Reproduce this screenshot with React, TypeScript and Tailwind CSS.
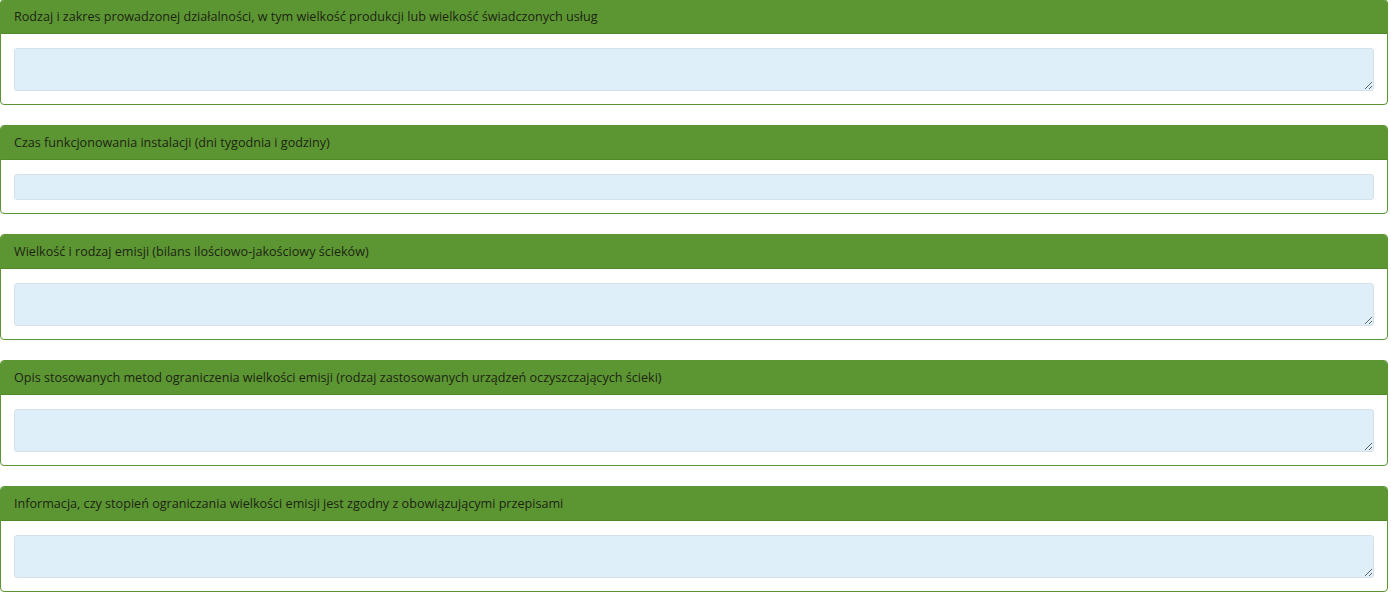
const sections = [
  { label: "Rodzaj i zakres prowadzonej działalności, w tym wielkość produkcji lub wielkość świadczonych usług", multi: true },
  { label: "Czas funkcjonowania instalacji (dni tygodnia i godziny)", multi: false },
  { label: "Wielkość i rodzaj emisji (bilans ilościowo-jakościowy ścieków)", multi: true },
  { label: "Opis stosowanych metod ograniczenia wielkości emisji (rodzaj zastosowanych urządzeń oczyszczających ścieki)", multi: true },
  { label: "Informacja, czy stopień ograniczania wielkości emisji jest zgodny z obowiązującymi przepisami", multi: true },
];

export default function App() {
  return (
    <div className="-mt-px flex w-[1388px] flex-col gap-[20px] bg-white font-['Open_Sans',sans-serif] text-[12.6px] text-[#1c2414]">
      {sections.map((s) => (
        <div key={s.label} className="overflow-hidden rounded-[4px] border border-[#5c9632] bg-white">
          {/* Header */}
          <div className="flex h-[34px] items-center border-b border-[#4f8a2a] bg-[#5c9632] px-[13px] pt-px">
            {s.label}
          </div>
          {/* Body */}
          <div className="px-[13px] pb-[13px] pt-[14px]">
            {s.multi ? (
              <textarea
                rows={2}
                className="block h-[43px] w-full resize-y rounded-[3px] border border-[#d5e0e8] bg-[#dfeffa] px-2 py-1 outline-none"
              />
            ) : (
              <input
                type="text"
                className="block h-[26px] w-full rounded-[3px] border border-[#d5e0e8] bg-[#dfeffa] px-2 outline-none"
              />
            )}
          </div>
        </div>
      ))}
    </div>
  );
}
